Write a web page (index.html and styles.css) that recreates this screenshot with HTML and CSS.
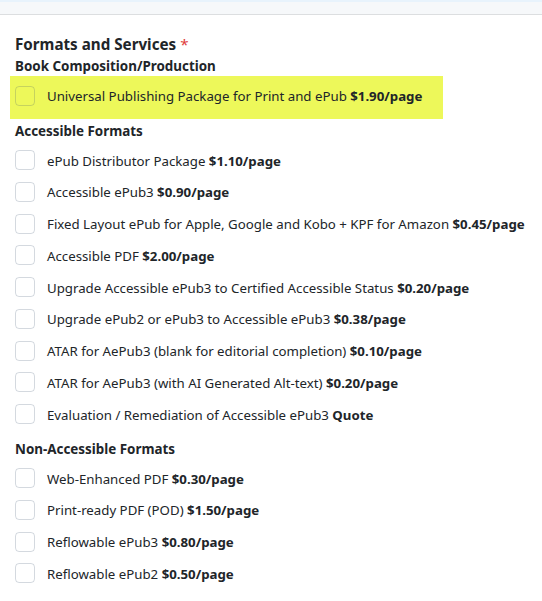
FILE: index.html
```html
<!DOCTYPE html>
<html lang="en">
<head>
<meta charset="utf-8">
<title>Formats and Services</title>
<link rel="stylesheet" href="styles.css">
</head>
<body>
<div class="topbar"></div>
<div class="card">
  <div class="title">Formats and Services <span class="req">*</span></div>
  <div class="group">Book Composition/Production</div>
  <div class="highlight">
    <label class="row"><span class="box"></span><span class="lbl">Universal Publishing Package for Print and ePub <b>$1.90/page</b></span></label>
  </div>
  <div class="group">Accessible Formats</div>
  <div class="list">
    <label class="row"><span class="box"></span><span class="lbl">ePub Distributor Package <b>$1.10/page</b></span></label>
    <label class="row"><span class="box"></span><span class="lbl">Accessible ePub3 <b>$0.90/page</b></span></label>
    <label class="row"><span class="box"></span><span class="lbl">Fixed Layout ePub for Apple, Google and Kobo + KPF for Amazon <b>$0.45/page</b></span></label>
    <label class="row"><span class="box"></span><span class="lbl">Accessible PDF <b>$2.00/page</b></span></label>
    <label class="row"><span class="box"></span><span class="lbl">Upgrade Accessible ePub3 to Certified Accessible Status <b>$0.20/page</b></span></label>
    <label class="row"><span class="box"></span><span class="lbl">Upgrade ePub2 or ePub3 to Accessible ePub3 <b>$0.38/page</b></span></label>
    <label class="row"><span class="box"></span><span class="lbl">ATAR for AePub3 (blank for editorial completion) <b>$0.10/page</b></span></label>
    <label class="row"><span class="box"></span><span class="lbl">ATAR for AePub3 (with AI Generated Alt-text) <b>$0.20/page</b></span></label>
    <label class="row"><span class="box"></span><span class="lbl">Evaluation / Remediation of Accessible ePub3 <b>Quote</b></span></label>
  </div>
  <div class="group group-gap">Non-Accessible Formats</div>
  <div class="list">
    <label class="row"><span class="box"></span><span class="lbl">Web-Enhanced PDF <b>$0.30/page</b></span></label>
    <label class="row"><span class="box"></span><span class="lbl">Print-ready PDF (POD) <b>$1.50/page</b></span></label>
    <label class="row"><span class="box"></span><span class="lbl">Reflowable ePub3 <b>$0.80/page</b></span></label>
    <label class="row"><span class="box"></span><span class="lbl">Reflowable ePub2 <b>$0.50/page</b></span></label>
  </div>
</div>
</body>
</html>
```
FILE: styles.css
```css
html, body {
  margin: 0;
  padding: 0;
  background: #ffffff;
}
body {
  font-family: "Noto Sans", "Open Sans", sans-serif;
  color: #212529;
  font-size: 13.25px;
}
.topbar {
  height: 12px;
  background: #f6f8fa;
  border-top: 2px solid #e8f3fc;
  border-bottom: 1px solid #dcdee0;
}
.card {
  padding: 17px 0 0 15px;
}
.title {
  font-size: 15.2px;
  font-weight: 700;
  line-height: 22px;
  height: 22px;
  margin-top: 0.5px;
}
.req {
  color: #e03c3c;
  font-weight: 400;
}
.group {
  font-weight: 700;
  font-size: 13.4px;
  line-height: 20px;
  height: 20px;
  margin-top: 1.5px;
}
.group + .list {
  margin-top: 3.6px;
}
.group-gap {
  margin-top: 8.6px;
}
.highlight {
  background: #edf85a;
  margin: 0 0 2px -5px;
  width: 428px;
  padding: 4px 0 7px 5px;
}
.highlight + .group {
  margin-top: 2px;
}
.row {
  display: flex;
  align-items: center;
  height: 31.75px;
}
.box {
  box-sizing: border-box;
  width: 20px;
  height: 20px;
  border: 1px solid rgba(60, 80, 110, 0.22);
  border-radius: 4px;
  flex: none;
  margin-right: 12px;
}
.lbl {
  line-height: 20px;
  white-space: nowrap;
  padding-top: 1px;
}
.lbl b {
  font-weight: 700;
}
```
